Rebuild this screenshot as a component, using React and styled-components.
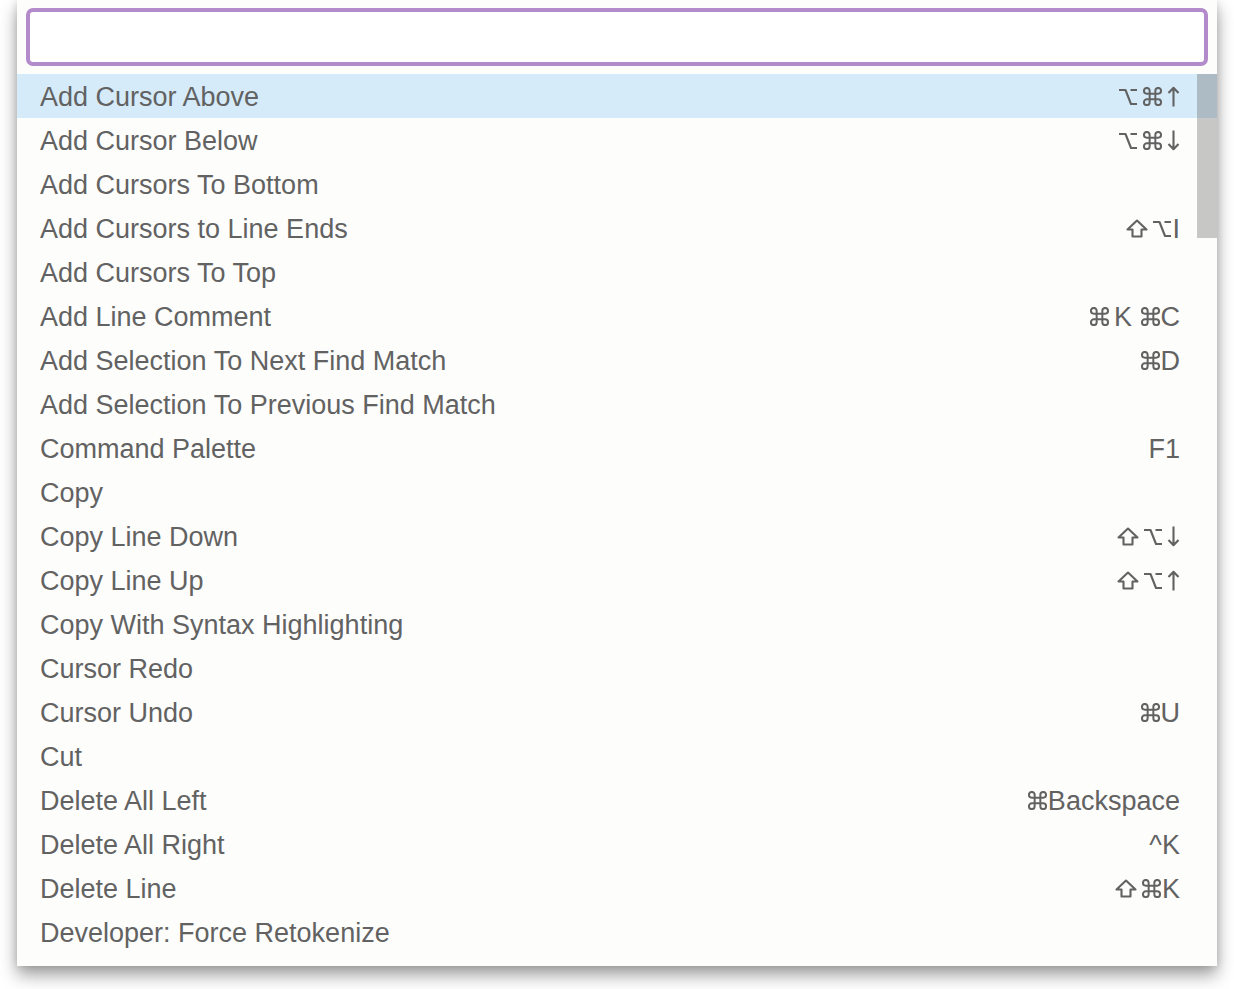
import React from 'react'
import styled, { createGlobalStyle } from 'styled-components';

const commands = [
    { label: 'Add Cursor Above', keys: '⌥⌘↑' },
    { label: 'Add Cursor Below', keys: '⌥⌘↓' },
    { label: 'Add Cursors To Bottom', keys: '' },
    { label: 'Add Cursors to Line Ends', keys: '⇧⌥I' },
    { label: 'Add Cursors To Top', keys: '' },
    { label: 'Add Line Comment', keys: '⌘K ⌘C' },
    { label: 'Add Selection To Next Find Match', keys: '⌘D' },
    { label: 'Add Selection To Previous Find Match', keys: '' },
    { label: 'Command Palette', keys: 'F1' },
    { label: 'Copy', keys: '' },
    { label: 'Copy Line Down', keys: '⇧⌥↓' },
    { label: 'Copy Line Up', keys: '⇧⌥↑' },
    { label: 'Copy With Syntax Highlighting', keys: '' },
    { label: 'Cursor Redo', keys: '' },
    { label: 'Cursor Undo', keys: '⌘U' },
    { label: 'Cut', keys: '' },
    { label: 'Delete All Left', keys: '⌘Backspace' },
    { label: 'Delete All Right', keys: '^K' },
    { label: 'Delete Line', keys: '⇧⌘K' },
    { label: 'Developer: Force Retokenize', keys: '' },
];

// mac modifier key glyphs, drawn as small stroked icons
const icons = {
    '⌘': { w: 21, h: 19, box: '2 2 20 20', d: 'M15 6v12a3 3 0 1 0 3-3H6a3 3 0 1 0 3 3V6a3 3 0 1 0-3 3h12a3 3 0 1 0-3-3' },
    '⌥': { w: 20, h: 18, box: '0 0 20 18', d: 'M1 2h6.5l5.5 14h6M12.5 2h6.5' },
    '⇧': { w: 22, h: 19, box: '0 0 22 19', d: 'M11 1.5 20.5 10.5h-5v7h-9v-7h-5z' },
    '↑': { w: 13, h: 21, box: '0 0 13 21', d: 'M1.5 7 6.5 1.8 11.5 7M6.5 2v18.5' },
    '↓': { w: 13, h: 21, box: '0 0 13 21', d: 'M1.5 14 6.5 19.2 11.5 14M6.5 19V0.5' },
};

function KeyIcon({ ch }) {
    const ic = icons[ch];
    return (
        <IconSvg
            width={ic.w}
            height={ic.h}
            viewBox={ic.box}
            tall={ic.h > 20}
            fill="none"
            stroke="currentColor"
            strokeWidth="2.1"
            strokeLinejoin="round"
            strokeLinecap="butt"
            aria-label={ch}
        >
            <path d={ic.d} />
        </IconSvg>
    )
}

function Keys({ text }) {
    return (
        <kbd>
            {Array.from(text).map((ch, i) =>
                icons[ch]
                    ? <KeyIcon key={i} ch={ch} />
                    : <React.Fragment key={i}>{ch}</React.Fragment>
            )}
        </kbd>
    )
}

function App() {
    return (
        <>
            <GlobalStyle />
            <PaletteStyled>
                <div className="search">
                    <input type="text" aria-label="Command" />
                </div>
                <div className="list">
                    {commands.map((cmd, i) => (
                        <Row key={cmd.label} selected={i === 0}>
                            <span>{cmd.label}</span>
                            <Keys text={cmd.keys} />
                        </Row>
                    ))}
                    <div className="thumb" />
                </div>
            </PaletteStyled>
        </>
    )
}

const GlobalStyle = createGlobalStyle`
    body{
        margin: 0;
        background: #ffffff;
        font-family: "Liberation Sans", "DejaVu Sans", sans-serif;
    }
    #root{
        padding-bottom: 24px;
    }
`;

const PaletteStyled = styled.div`
    width: 1200px;
    margin: 0 17px;
    background: #fdfdfc;
    box-shadow: 0 9px 16px rgba(0, 0, 0, 0.38), 0 0 8px rgba(0, 0, 0, 0.12);
    padding-bottom: 12px;
    .search{
        padding: 8px 9px;
        input{
            display: block;
            width: 100%;
            height: 58px;
            box-sizing: border-box;
            border: 4px solid #b38bcb;
            border-radius: 7px;
            background: #ffffff;
            outline: none;
        }
    }
    .list{
        position: relative;
        .thumb{
            position: absolute;
            top: 0;
            right: 0;
            width: 20px;
            height: 164px;
            background: rgba(100, 100, 100, 0.355);
        }
    }
`;

const Row = styled.div`
    display: flex;
    justify-content: space-between;
    align-items: center;
    height: 44px;
    padding: 2px 37px 0 23px;
    box-sizing: border-box;
    background: ${props => props.selected ? '#d6ebfa' : 'transparent'};
    color: #626262;
    span, kbd{
        font-family: "Liberation Sans", "DejaVu Sans", sans-serif;
        font-size: 27px;
        white-space: nowrap;
    }
`;

const IconSvg = styled.svg`
    display: inline-block;
    vertical-align: ${props => props.tall ? '-1px' : '0'};
    margin-right: 4px;
    &:last-child{
        margin-right: 0;
    }
`;

export default App;
